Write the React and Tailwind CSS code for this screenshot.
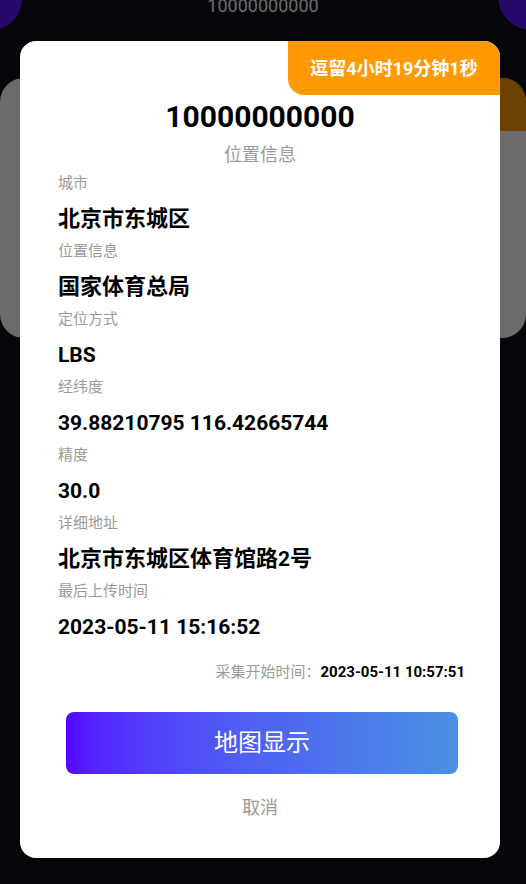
import React from 'react';

const font = "font-['Roboto','Noto_Sans_CJK_SC',sans-serif]";

const fields = [
	{ label: '城市', value: '北京市东城区' },
	{ label: '位置信息', value: '国家体育总局' },
	{ label: '定位方式', value: 'LBS' },
	{ label: '经纬度', value: '39.88210795 116.42665744' },
	{ label: '精度', value: '30.0' },
	{ label: '详细地址', value: '北京市东城区体育馆路2号' },
	{ label: '最后上传时间', value: '2023-05-11 15:16:52' },
];

// CJK runs render a touch larger than the latin digits
const Mixed = ({ text }) =>
	text.split(/([\u4e00-\u9fff]+)/).filter(Boolean).map((part, i) =>
		/[\u4e00-\u9fff]/.test(part)
			? <span key={i} className="text-[22px]">{part}</span>
			: <span key={i}>{part}</span>
	);

const Field = ({ label, value }) => (
	<div className="flex flex-col">
		<span className="text-[15px] leading-[20px] text-[#9a9a9a]">{label}</span>
		<span className="mt-[11px] text-[21px] leading-[30px] h-[30px] font-bold text-black">
			<Mixed text={value} />
		</span>
	</div>
);

const App = () => (
	<div className={`relative w-[526px] h-[884px] overflow-hidden bg-[#0c0e1a] ${font}`}>
		{/* page behind the dialog */}
		<div className="absolute -left-[40px] -top-[40px] w-[62px] h-[70px] rounded-full bg-[#5a1aff]"></div>
		<div className="absolute -right-[40px] -top-[40px] w-[68px] h-[70px] rounded-full bg-[#5a1aff]"></div>
		<div className="flex flex-col">
			<div className="-mt-[9px] h-[30px] text-center text-[18px] leading-[30px] text-white">10000000000</div>
			<div className="relative mt-[57px] h-[260px] rounded-[24px] bg-white overflow-hidden">
				<div className="absolute top-0 right-0 w-[212px] h-[53px] rounded-bl-[16px] bg-[#ff9a05]"></div>
			</div>
		</div>

		{/* dim overlay */}
		<div className="absolute inset-0 bg-black/[0.58]"></div>

		{/* dialog */}
		<div className="absolute left-[20px] top-[41px] w-[480px] rounded-[16px] bg-white pt-[58px] pb-[38px]">
			<div className="absolute top-0 right-0 w-[212px] h-[54px] rounded-tr-[16px] rounded-bl-[16px] bg-[#ff9a05] flex items-center justify-center">
				<span className="text-[18px] font-bold text-white">逗留4小时19分钟1秒</span>
			</div>
			<div className="text-center text-[30px] leading-[36px] font-bold text-black">10000000000</div>
			<div className="mt-[8px] text-center text-[18px] leading-[24px] text-[#9a9a9a]">位置信息</div>
			<div className="mt-[6px] pl-[38px] pr-[35px] flex flex-col gap-[7px]">
				{fields.map((f) => (
					<Field key={f.label} label={f.label} value={f.value} />
				))}
			</div>
			<div className="mt-[20px] pr-[35px] flex justify-end items-center leading-[20px]">
				<span className="text-[15px] text-[#9a9a9a]">采集开始时间：</span>
				<span className="text-[15px] font-bold text-black">2023-05-11 10:57:51</span>
			</div>
			<button className="mt-[30px] ml-[46px] w-[392px] h-[62px] rounded-[8px] bg-gradient-to-r from-[#5500ff] to-[#4a90e2] text-[24px] text-white flex items-center justify-center">
				地图显示
			</button>
			<div className="mt-[22px] text-center text-[18px] leading-[24px] text-[#9a9a9a]">取消</div>
		</div>
	</div>
);

export default App;
